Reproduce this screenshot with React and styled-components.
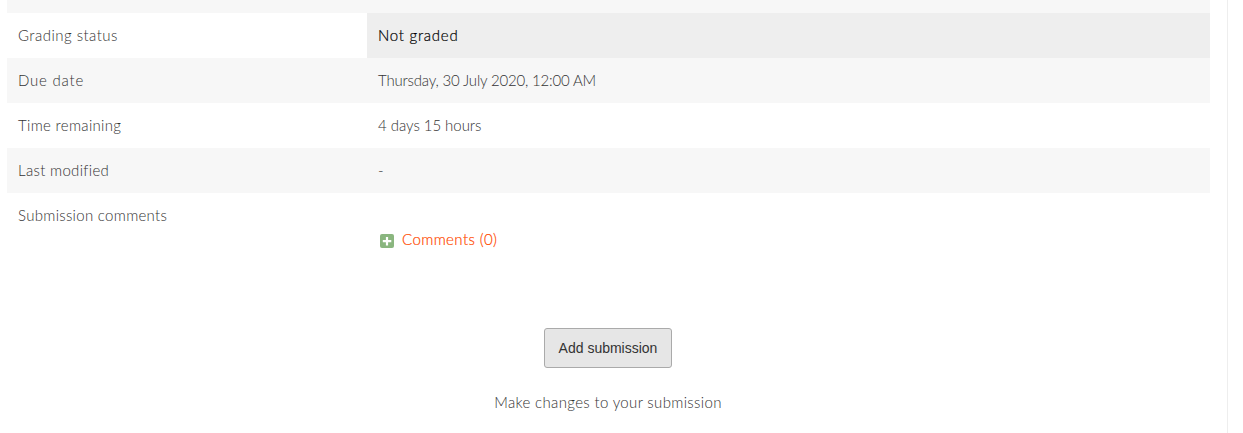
import React from 'react';
import styled, { createGlobalStyle } from 'styled-components'


const GlobalStyle = createGlobalStyle`
    * {
        box-sizing: border-box;
    }
    body {
        margin: 0;
        background: #fff;
        overflow: hidden;
    }
`;

const Page = styled.div`
    width: 1228px;
    height: 433px;
    padding-left: 7px;
    overflow: hidden;
    border-right: 1px solid #eee;
    font-family: 'Century Gothic', 'Lato Light', Lato, sans-serif;
    font-size: 15px;
    font-weight: 300;
    line-height: 20px;
    color: #333;
`;

const Table = styled.div`
    display: flex;
    flex-direction: column;
    width: 1203px;
`;

const Row = styled.div`
    display: flex;
    height: ${props => props.$height || 45}px;
    background: ${props => props.$striped ? '#f7f7f7' : '#fff'};
`;

const Label = styled.div`
    width: 360px;
    padding: 12px 11px;
`;

const Value = styled.div`
    flex: 1;
    padding: ${props => props.$comments ? 36 : 12}px 11px 0;
    color: ${props => props.$active ? '#000' : 'inherit'};
    background: ${props => props.$active ? '#eee' : 'transparent'};
    -webkit-text-stroke: ${props => props.$active ? '0.2px #000' : '0'};
`;

const Fit = styled.span`
    display: inline-block;
    white-space: nowrap;
    letter-spacing: ${props => props.$spacing || 0}px;
`;

const CommentsLink = styled.a`
    display: flex;
    align-items: center;
    gap: 8px;
    padding-left: 2px;
    color: #ff4a00;
    -webkit-text-stroke: 0.2px #ff4a00;

    svg {
        margin-top: 4px;
    }
`;

const Actions = styled.div`
    display: flex;
    flex-direction: column;
    align-items: center;
    width: 1202px;
    padding-top: 27px;
`;

const Button = styled.button`
    width: 128px;
    height: 40px;
    margin-bottom: 24px;
    padding: 0;
    border: 1px solid #aaa;
    border-radius: 3px;
    background: #e6e6e6;
    color: #333;
    font: 14px 'Liberation Sans', Arial, sans-serif;
`;

const PlusIcon = () => (
    <svg width="14" height="14" viewBox="0 0 14 14">
        <rect width="14" height="14" rx="2" fill="#8ab67f" />
        <path d="M7 3v8.5M2.8 7.2h8.5" stroke="#fff" strokeWidth="2.2" />
    </svg>
)

const rows = [
    { label: 'Grading status', labelSpacing: 0.47, value: 'Not graded', spacing: 0.75, active: true },
    { label: 'Due date', labelSpacing: 0.78, value: 'Thursday, 30 July 2020, 12:00 AM', spacing: -0.18, striped: true },
    { label: 'Time remaining', labelSpacing: 0.32, value: '4 days 15 hours', spacing: -0.04 },
    { label: 'Last modified', labelSpacing: 0.32, value: '-', striped: true },
]

export default function App() {
    return (
        <Page>
            <GlobalStyle />
            <Table>
                <Row $height={13} $striped />
                {rows.map(row => (
                    <Row key={row.label} $striped={row.striped}>
                        <Label><Fit $spacing={row.labelSpacing}>{row.label}</Fit></Label>
                        <Value $active={row.active}><Fit $spacing={row.spacing}>{row.value}</Fit></Value>
                    </Row>
                ))}
                <Row $height={108}>
                    <Label><Fit $spacing={0.3}>Submission comments</Fit></Label>
                    <Value $comments>
                        <CommentsLink>
                            <PlusIcon />
                            <Fit $spacing={0.4}>Comments (0)</Fit>
                        </CommentsLink>
                    </Value>
                </Row>
            </Table>
            <Actions>
                <Button>Add submission</Button>
                <Fit $spacing={0.34}>Make changes to your submission</Fit>
            </Actions>
        </Page>
    )
}
